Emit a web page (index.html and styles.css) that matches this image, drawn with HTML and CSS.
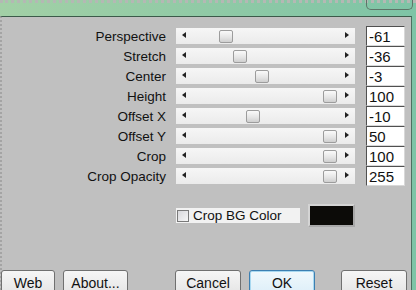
FILE: index.html
```html
<!DOCTYPE html>
<html lang="en">

<head>
    <meta charset="UTF-8">
    <title>Perspective</title>
    <link rel="stylesheet" href="styles.css">
</head>

<body>

    <div id="titlebar">
        <div id="tab"></div>
    </div>

    <div id="window">
        <div id="rows">
            <div class="label">Perspective</div>
            <div class="track"><span class="arrow left"></span><span class="thumb" style="left: 43px"></span><span class="arrow right"></span></div>
            <div class="value">-61</div>

            <div class="label">Stretch</div>
            <div class="track"><span class="arrow left"></span><span class="thumb" style="left: 57px"></span><span class="arrow right"></span></div>
            <div class="value">-36</div>

            <div class="label">Center</div>
            <div class="track"><span class="arrow left"></span><span class="thumb" style="left: 79px"></span><span class="arrow right"></span></div>
            <div class="value">-3</div>

            <div class="label">Height</div>
            <div class="track"><span class="arrow left"></span><span class="thumb" style="left: 147px"></span><span class="arrow right"></span></div>
            <div class="value">100</div>

            <div class="label">Offset X</div>
            <div class="track"><span class="arrow left"></span><span class="thumb" style="left: 70px"></span><span class="arrow right"></span></div>
            <div class="value">-10</div>

            <div class="label">Offset Y</div>
            <div class="track"><span class="arrow left"></span><span class="thumb" style="left: 147px"></span><span class="arrow right"></span></div>
            <div class="value">50</div>

            <div class="label">Crop</div>
            <div class="track"><span class="arrow left"></span><span class="thumb" style="left: 147px"></span><span class="arrow right"></span></div>
            <div class="value">100</div>

            <div class="label">Crop Opacity</div>
            <div class="track"><span class="arrow left"></span><span class="thumb" style="left: 147px"></span><span class="arrow right"></span></div>
            <div class="value">255</div>
        </div>

        <div id="bgrow">
            <label class="check"><span class="box"></span>Crop BG Color</label>
            <div class="swatch"></div>
        </div>

        <div id="buttons">
            <div class="btn web">Web</div>
            <div class="btn about">About...</div>
            <div class="btn cancel">Cancel</div>
            <div class="btn ok">OK</div>
            <div class="btn reset">Reset</div>
        </div>
    </div>

</body>

</html>
```

FILE: styles.css
```css
* {
    box-sizing: border-box;
}

body {
    margin: 0;
    width: 416px;
    height: 290px;
    overflow: hidden;
    background: linear-gradient(90deg, #a2d0a6, #7ec4a6);
    font-family: "Liberation Sans", Arial, sans-serif;
    font-size: 13.5px;
    color: #111;
}

#titlebar {
    position: relative;
    height: 16px;
    border-top: 3px dotted #b4b8b4;
}

#tab {
    position: absolute;
    top: -3px;
    left: 366px;
    width: 47px;
    height: 10px;
    border: 1px solid #5e7468;
    border-top: none;
    border-radius: 0 0 5px 5px;
}

#window {
    width: 412px;
    height: 274px;
    background: #c0c0c0;
    border-top: 1px solid #3c5a4a;
    border-right: 1px solid #4e7060;
    border-left: 2px dotted #a4a4a4;
    padding-top: 9px;
}

#rows {
    display: grid;
    grid-template-columns: 164px 179px 40px;
    grid-auto-rows: 20px;
    column-gap: 10px;
    align-items: center;
}

#rows .value {
    margin-left: 1px;
}

.label {
    text-align: right;
    white-space: nowrap;
}

.track {
    position: relative;
    height: 16px;
    background: linear-gradient(#f6f6f6, #ebebeb);
}

.arrow {
    position: absolute;
    top: 4px;
    width: 0;
    height: 0;
    border-top: 3.5px solid transparent;
    border-bottom: 3.5px solid transparent;
}

.arrow.left {
    left: 6px;
    border-right: 4px solid #222;
}

.arrow.right {
    right: 6px;
    border-left: 4px solid #222;
}

.thumb {
    position: absolute;
    top: 2px;
    width: 14px;
    height: 13px;
    border: 1px solid #9c9c9c;
    border-radius: 2px;
    background: linear-gradient(#fafafa, #e6e6e6 55%, #cfcfcf);
}

.value {
    height: 20px;
    padding-left: 2px;
    line-height: 19px;
    font-size: 15px;
    background: #fff;
    border: 1px solid #505050;
    border-right-color: #d8d8d8;
    border-bottom-color: #d8d8d8;
}

#bgrow {
    display: flex;
    align-items: center;
    margin-top: 18px;
    margin-left: 174px;
    gap: 8px;
}

.check {
    display: flex;
    align-items: center;
    width: 124px;
    height: 15px;
    background: #f2f2f2;
}

.box {
    width: 12px;
    height: 12px;
    margin: 0 4px 0 1px;
    border: 1px solid #7a7a7a;
    background: linear-gradient(135deg, #d8d8dc, #f6f6f6);
}

.swatch {
    width: 47px;
    height: 23px;
    background: #0c0b08;
    border: 2px solid #d4d4d4;
    border-right-color: #a8a8a8;
    border-bottom-color: #a8a8a8;
}

#buttons {
    display: flex;
    margin-top: 43px;
    margin-left: -1px;
}

.btn {
    height: 26px;
    padding-top: 4px;
    text-align: center;
    border: 1px solid #707070;
    border-radius: 3px;
    background: linear-gradient(#f6f6f6, #e4e4e4);
    font-size: 14px;
}

.web {
    width: 54px;
}

.about {
    width: 65px;
    margin-left: 8px;
}

.cancel {
    width: 66px;
    margin-left: 47px;
}

.ok {
    width: 66px;
    margin-left: 8px;
    border-color: #3c7fb1;
    box-shadow: inset 0 0 0 1px #a8d8f0;
    background: linear-gradient(#f0f8fc, #dceef8);
}

.reset {
    width: 66px;
    margin-left: 26px;
}
```
